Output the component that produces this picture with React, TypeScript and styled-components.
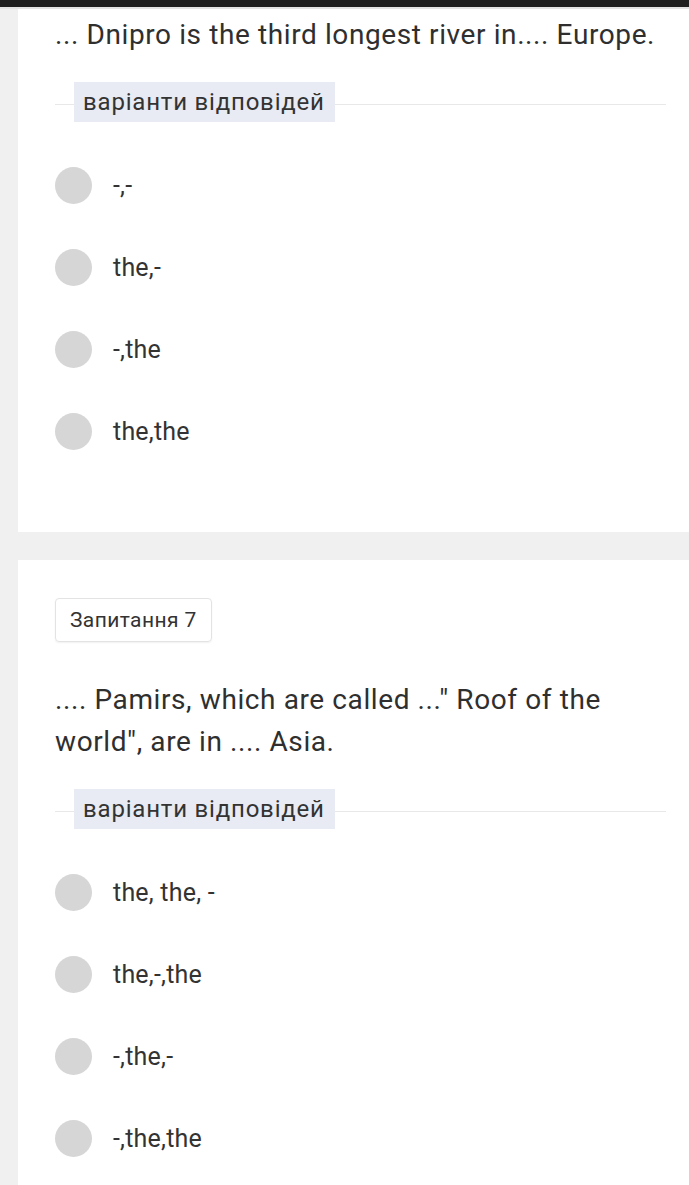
import React from "react";
import styled, { createGlobalStyle } from "styled-components";

const GlobalStyle = createGlobalStyle`
  html, body {
    margin: 0;
    padding: 0;
    background: #f0f0f0;
    font-family: Roboto, "Noto Sans", Arial, sans-serif;
    color: #2f2f2f;
  }
`;

const TopBar = styled.div`
  height: 7px;
  background: #1f1f1f;
  border-bottom: 2px solid #e4e4e4;
`;

const Page = styled.div`
  padding-left: 18px;
  display: flex;
  flex-direction: column;
  gap: 28px;
`;

const Card = styled.section<{ $top: number; $bottom: number }>`
  background: #ffffff;
  padding: ${(p) => p.$top}px 23px ${(p) => p.$bottom}px 37px;
  display: flex;
  flex-direction: column;
`;

const Badge = styled.div`
  align-self: flex-start;
  box-sizing: border-box;
  height: 44px;
  padding: 0 14px;
  display: flex;
  align-items: center;
  font-size: 21px;
  letter-spacing: 0.4px;
  color: #333;
  border: 1px solid #e3e3e3;
  border-radius: 4px;
  box-shadow: 0 1px 2px rgba(0, 0, 0, 0.06);
  margin-bottom: 37px;
`;

const Question = styled.p`
  margin: 0;
  font-size: 28px;
  letter-spacing: 0.6px;
  line-height: 42px;
  color: #2f2f2f;
`;

const Divider = styled.div`
  display: flex;
  align-items: center;
  margin-top: 26px;
`;

const Rule = styled.div<{ $grow?: boolean }>`
  height: 1px;
  background: #e8e8e8;
  flex: ${(p) => (p.$grow ? "1 1 auto" : "0 0 19px")};
  margin-top: 4px;
`;

const Label = styled.div`
  height: 40px;
  padding: 0 10px 0 9px;
  display: flex;
  align-items: center;
  background: #e8ebf4;
  font-size: 24px;
  letter-spacing: 0.8px;
  color: #333;
`;

const Options = styled.div`
  display: flex;
  flex-direction: column;
  gap: 45px;
  padding-top: 45px;
`;

const Option = styled.label`
  display: flex;
  align-items: center;
  gap: 21px;
  height: 37px;
`;

const Radio = styled.span`
  width: 37px;
  height: 37px;
  border-radius: 50%;
  background: #d6d6d6;
  flex: 0 0 37px;
`;

const OptionText = styled.span`
  font-size: 25px;
  letter-spacing: 0.2px;
  color: #333;
`;

type Q = {
  badge?: string;
  text: string;
  options: string[];
  top: number;
  bottom: number;
};

const questions: Q[] = [
  {
    text: "... Dnipro is the third longest river in.... Europe.",
    options: ["-,-", "the,-", "-,the", "the,the"],
    top: 5,
    bottom: 82,
  },
  {
    badge: "Запитання 7",
    text: '.... Pamirs, which are called ..." Roof of the world", are in .... Asia.',
    options: ["the, the, -", "the,-,the", "-,the,-", "-,the,the"],
    top: 38,
    bottom: 40,
  },
];

export default function App() {
  return (
    <>
      <GlobalStyle />
      <TopBar />
      <Page>
        {questions.map((q, i) => (
          <Card key={i} $top={q.top} $bottom={q.bottom}>
            {q.badge && <Badge>{q.badge}</Badge>}
            <Question>{q.text}</Question>
            <Divider>
              <Rule />
              <Label>варіанти відповідей</Label>
              <Rule $grow />
            </Divider>
            <Options>
              {q.options.map((o) => (
                <Option key={o}>
                  <Radio />
                  <OptionText>{o}</OptionText>
                </Option>
              ))}
            </Options>
          </Card>
        ))}
      </Page>
    </>
  );
}
